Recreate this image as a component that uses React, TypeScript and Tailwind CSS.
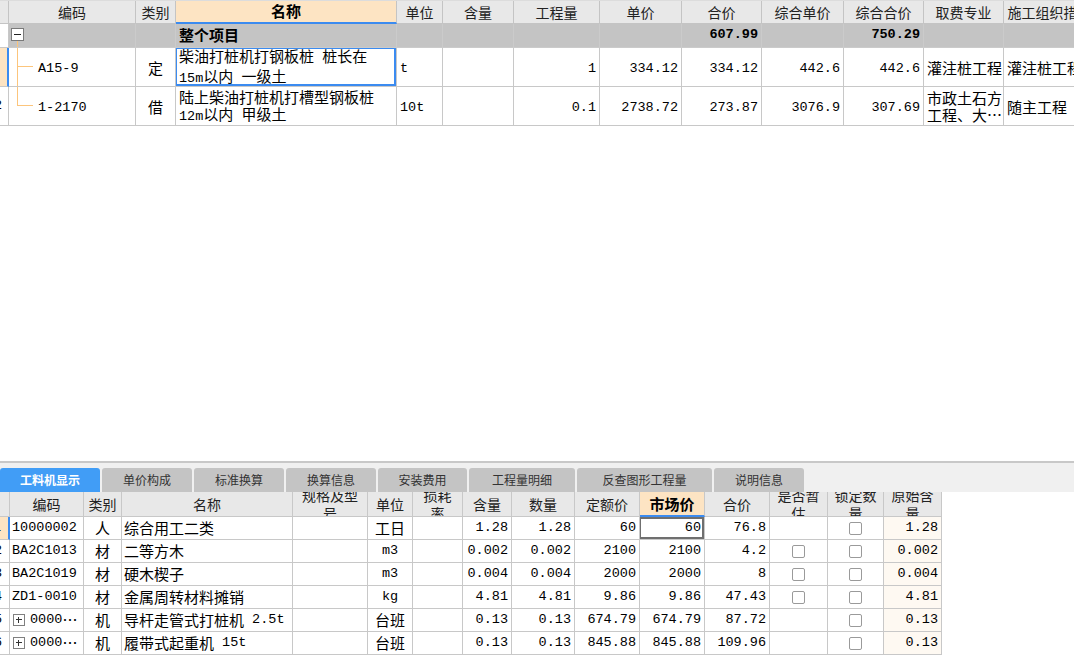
import React from 'react'

const cjk = "font-['Noto_Sans_CJK_SC',sans-serif]"
const mono = "font-['Liberation_Mono',monospace] text-[13.5px]"

type Align = 'l' | 'c' | 'r'

const alignClass: Record<Align, string> = {
  l: 'justify-start pl-[3px]',
  c: 'justify-center',
  r: 'justify-end pr-[3px]',
}

// ascii runs get the narrow mono face, like the half-width glyphs of the original grid font
function Txt({ s }: { s: string }) {
  const parts = s.split(/([\x20-\x7e]+)/).filter(Boolean)
  return (
    <>
      {parts.map((p, i) =>
        /^[\x20-\x7e]+$/.test(p) ? (
          <span key={i} className={`${mono} whitespace-pre`}>
            {p}
          </span>
        ) : (
          <span key={i}>{p}</span>
        ),
      )}
    </>
  )
}

function Lines({ lines }: { lines: string[] }) {
  return (
    <div className="flex flex-col leading-[17px]">
      {lines.map((l, i) => (
        <div key={i} className="whitespace-nowrap">
          <Txt s={l} />
        </div>
      ))}
    </div>
  )
}

function Check() {
  return <span className="block h-[13px] w-[13px] rounded-[2px] border border-[#9a9a9a] bg-white" />
}

function PlusBox() {
  return (
    <span className="relative mr-[5px] inline-block h-[12px] w-[12px] shrink-0 border border-[#808080] bg-white">
      <span className="absolute left-[2px] top-[4px] h-px w-[6px] bg-[#333]" />
      <span className="absolute left-[4px] top-[2px] h-[6px] w-px bg-[#333]" />
    </span>
  )
}

type TopCol = { key: string; w: string; head: string; align: Align }

const topCols: TopCol[] = [
  { key: 'code', w: 'w-[127px]', head: '编码', align: 'l' },
  { key: 'kind', w: 'w-[40px]', head: '类别', align: 'c' },
  { key: 'name', w: 'w-[221px]', head: '名称', align: 'l' },
  { key: 'unit', w: 'w-[46px]', head: '单位', align: 'l' },
  { key: 'rate', w: 'w-[71px]', head: '含量', align: 'r' },
  { key: 'qty', w: 'w-[86px]', head: '工程量', align: 'r' },
  { key: 'price', w: 'w-[82px]', head: '单价', align: 'r' },
  { key: 'sum', w: 'w-[80px]', head: '合价', align: 'r' },
  { key: 'cprice', w: 'w-[82px]', head: '综合单价', align: 'r' },
  { key: 'csum', w: 'w-[80px]', head: '综合合价', align: 'r' },
  { key: 'fee', w: 'w-[80px]', head: '取费专业', align: 'l' },
  { key: 'org', w: 'w-[120px]', head: '施工组织措施类别', align: 'l' },
]

type TopRow = {
  no: string
  selected: boolean
  last: boolean
  cells: Record<string, string[]>
}

const topRows: TopRow[] = [
  {
    no: '',
    selected: true,
    last: false,
    cells: {
      code: ['A15-9'],
      kind: ['定'],
      name: ['柴油打桩机打钢板桩 桩长在', '15m以内 一级土'],
      unit: ['t'],
      rate: [],
      qty: ['1'],
      price: ['334.12'],
      sum: ['334.12'],
      cprice: ['442.6'],
      csum: ['442.6'],
      fee: ['灌注桩工程'],
      org: ['灌注桩工程'],
    },
  },
  {
    no: '2',
    selected: false,
    last: true,
    cells: {
      code: ['1-2170'],
      kind: ['借'],
      name: ['陆上柴油打桩机打槽型钢板桩', '12m以内 甲级土'],
      unit: ['10t'],
      rate: [],
      qty: ['0.1'],
      price: ['2738.72'],
      sum: ['273.87'],
      cprice: ['3076.9'],
      csum: ['307.69'],
      fee: ['市政土石方', '工程、大…'],
      org: ['随主工程'],
    },
  },
]

type BotCol = { key: string; w: string; head: string[]; align: Align }

const botCols: BotCol[] = [
  { key: 'code', w: 'w-[74px]', head: ['编码'], align: 'l' },
  { key: 'kind', w: 'w-[38px]', head: ['类别'], align: 'c' },
  { key: 'name', w: 'w-[171px]', head: ['名称'], align: 'l' },
  { key: 'spec', w: 'w-[75px]', head: ['规格及型', '号'], align: 'l' },
  { key: 'unit', w: 'w-[45px]', head: ['单位'], align: 'c' },
  { key: 'loss', w: 'w-[50px]', head: ['损耗', '率'], align: 'r' },
  { key: 'rate', w: 'w-[49px]', head: ['含量'], align: 'r' },
  { key: 'qty', w: 'w-[63px]', head: ['数量'], align: 'r' },
  { key: 'base', w: 'w-[65px]', head: ['定额价'], align: 'r' },
  { key: 'market', w: 'w-[65px]', head: ['市场价'], align: 'r' },
  { key: 'sum', w: 'w-[65px]', head: ['合价'], align: 'r' },
  { key: 'est', w: 'w-[58px]', head: ['是否暂', '估'], align: 'c' },
  { key: 'lock', w: 'w-[56px]', head: ['锁定数', '量'], align: 'c' },
  { key: 'orig', w: 'w-[58px]', head: ['原始含', '量'], align: 'r' },
]

type BotRow = {
  no: string
  code: string
  expand?: boolean
  kind: string
  name: string
  unit: string
  rate: string
  qty: string
  base: string
  market: string
  sum: string
  est: boolean
  orig: string
}

const botRows: BotRow[] = [
  { no: '1', code: '10000002', kind: '人', name: '综合用工二类', unit: '工日', rate: '1.28', qty: '1.28', base: '60', market: '60', sum: '76.8', est: false, orig: '1.28' },
  { no: '2', code: 'BA2C1013', kind: '材', name: '二等方木', unit: 'm3', rate: '0.002', qty: '0.002', base: '2100', market: '2100', sum: '4.2', est: true, orig: '0.002' },
  { no: '3', code: 'BA2C1019', kind: '材', name: '硬木楔子', unit: 'm3', rate: '0.004', qty: '0.004', base: '2000', market: '2000', sum: '8', est: true, orig: '0.004' },
  { no: '4', code: 'ZD1-0010', kind: '材', name: '金属周转材料摊销', unit: 'kg', rate: '4.81', qty: '4.81', base: '9.86', market: '9.86', sum: '47.43', est: true, orig: '4.81' },
  { no: '5', code: '0000…', expand: true, kind: '机', name: '导杆走管式打桩机 2.5t', unit: '台班', rate: '0.13', qty: '0.13', base: '674.79', market: '674.79', sum: '87.72', est: false, orig: '0.13' },
  { no: '6', code: '0000…', expand: true, kind: '机', name: '履带式起重机 15t', unit: '台班', rate: '0.13', qty: '0.13', base: '845.88', market: '845.88', sum: '109.96', est: false, orig: '0.13' },
]

const tabs = [
  { label: '工料机显示', w: 'w-[100px]' },
  { label: '单价构成', w: 'w-[90px]' },
  { label: '标准换算', w: 'w-[90px]' },
  { label: '换算信息', w: 'w-[90px]' },
  { label: '安装费用', w: 'w-[89px]' },
  { label: '工程量明细', w: 'w-[106px]' },
  { label: '反查图形工程量', w: 'w-[135px]' },
  { label: '说明信息', w: 'w-[90px]' },
]

function TopTable() {
  return (
    <div className="w-full overflow-hidden">
      {/* header */}
      <div className="flex h-[24px] border-t border-[#dcdcdc] bg-[#e8e8e8] text-[14px] text-[#222]">
        <div className="w-[9px] shrink-0 border-r border-b border-[#c4c4c4]" />
        {topCols.map((c) => (
          <div
            key={c.key}
            className={`${c.w} flex shrink-0 items-center justify-center overflow-hidden whitespace-nowrap border-r border-[#c4c4c4] ${
              c.key === 'name' ? 'border-b-2 border-b-[#3b8bf0] bg-[#fde4c3] text-[15px] font-bold text-black' : 'border-b'
            }`}
          >
            {c.head}
          </div>
        ))}
      </div>

      {/* summary row */}
      <div className="flex h-[24px] bg-[#c4c4c4] text-[15px] font-bold">
        <div className="w-[9px] shrink-0 border-r border-b border-[#c8c8c8] bg-white" />
        {topCols.map((c) => (
          <div
            key={c.key}
            className={`${c.w} relative flex shrink-0 items-center overflow-hidden whitespace-nowrap border-r border-b border-[#cbcbcb] ${alignClass[c.align]}`}
          >
            {c.key === 'code' && (
              <>
                <span className="absolute left-[2px] top-[4px] h-[13px] w-[13px] border border-[#7a7a7a] bg-white">
                  <span className="absolute left-[2px] top-[5px] h-px w-[7px] bg-[#222]" />
                </span>
                <span className="absolute left-[8px] top-[17px] -bottom-px w-px bg-[#fcc57c]" />
              </>
            )}
            {c.key === 'name' && '整个项目'}
            {c.key === 'sum' && <Txt s="607.99" />}
            {c.key === 'csum' && <Txt s="750.29" />}
          </div>
        ))}
      </div>

      {topRows.map((r) => (
        <div key={r.cells.code[0]} className="flex h-[39px] bg-white text-[15px]">
          <div
            className={`flex w-[9px] shrink-0 items-center justify-end overflow-hidden border-b border-[#c8c8c8] pr-[6px] ${
              r.selected ? 'border-r-2 border-r-[#3b8bf0] bg-[#fde4c3]' : 'border-r'
            }`}
          >
            <Txt s={r.no} />
          </div>
          {topCols.map((c) => (
            <div
              key={c.key}
              className={`${c.w} relative flex shrink-0 items-center overflow-hidden whitespace-nowrap border-r border-b border-[#c8c8c8] ${
                c.key === 'code' ? 'pl-[29px]' : alignClass[c.align]
              }`}
            >
              {c.key === 'code' && (
                <>
                  <span className={`absolute left-[8px] -top-px w-px bg-[#fcc57c] ${r.last ? 'h-[20px]' : '-bottom-px'}`} />
                  <span className="absolute left-[8px] top-[18px] h-px w-[16px] bg-[#fcc57c]" />
                </>
              )}
              <Lines lines={r.cells[c.key]} />
              {c.key === 'name' && r.selected && (
                <span className="pointer-events-none absolute -left-px -top-px right-0 bottom-0 border-2 border-[#3b8bf0]" />
              )}
            </div>
          ))}
        </div>
      ))}
    </div>
  )
}

function botValue(r: BotRow, key: string): React.ReactNode {
  switch (key) {
    case 'code':
      return r.expand ? (
        <span className="flex items-center pl-px">
          <PlusBox />
          <Txt s={r.code} />
        </span>
      ) : (
        <Txt s={r.code} />
      )
    case 'est':
      return r.est ? <Check /> : null
    case 'lock':
      return <Check />
    case 'spec':
    case 'loss':
      return null
    default:
      return <Txt s={String(r[key as keyof BotRow] ?? '')} />
  }
}

function BottomTable() {
  return (
    <div className="w-full overflow-hidden">
      <div className="flex h-[25px] text-[14px] text-[#222]">
        <div className="w-[10px] shrink-0 border-r border-b border-[#c8c8c8] bg-[#e8e8e8]" />
        {botCols.map((c) => (
          <div
            key={c.key}
            className={`${c.w} flex shrink-0 flex-col items-center justify-center overflow-hidden whitespace-nowrap border-r border-[#c8c8c8] leading-[18px] ${
              c.key === 'market' ? 'border-b-2 border-b-[#3b8bf0] bg-[#fde4c3] text-[15px] font-bold text-black' : 'border-b bg-[#e8e8e8]'
            }`}
          >
            {c.head.map((h) => (
              <span key={h}>{h}</span>
            ))}
          </div>
        ))}
      </div>

      {botRows.map((r, ri) => (
        <div key={r.no} className="flex h-[23px] text-[15px]">
          <div
            className={`flex w-[10px] shrink-0 items-center justify-end overflow-hidden border-b border-[#c8c8c8] pr-[7px] ${
              ri === 0 ? 'border-r-2 border-r-[#3b8bf0] bg-[#fde4c3]' : 'border-r bg-white'
            }`}
          >
            <Txt s={r.no} />
          </div>
          {botCols.map((c) => (
            <div
              key={c.key}
              className={`${c.w} relative flex shrink-0 items-center overflow-hidden whitespace-nowrap border-r border-b border-[#c8c8c8] ${
                c.key === 'orig' ? 'bg-[#fef9f2]' : 'bg-white'
              } ${c.key === 'code' || c.key === 'name' ? 'justify-start pl-[2px]' : alignClass[c.align]}`}
            >
              {botValue(r, c.key)}
              {ri === 0 && c.key === 'market' && (
                <span className="pointer-events-none absolute -left-px top-0 right-0 bottom-0 border-2 border-[#6f6f6f]" />
              )}
            </div>
          ))}
        </div>
      ))}
    </div>
  )
}

export default function App() {
  return (
    <div className={`${cjk} flex h-[662px] w-[1074px] flex-col overflow-hidden bg-white text-black`}>
      <div className="h-[461px] shrink-0 overflow-hidden">
        <TopTable />
      </div>
      <div className="h-[2px] shrink-0 bg-[#c8c8c8]" />
      <div className="flex h-[29px] shrink-0 items-end gap-[2px] bg-[#f0f0f0]">
        {tabs.map((t, i) => (
          <div
            key={t.label}
            className={`${t.w} flex h-[24px] shrink-0 items-center justify-center rounded-t-[3px] text-[12px] ${
              i === 0 ? 'bg-[#419df6] font-bold text-white' : 'bg-[#c4c4c4] text-[#333]'
            }`}
          >
            {t.label}
          </div>
        ))}
      </div>
      <div className="flex-1 overflow-hidden">
        <BottomTable />
      </div>
    </div>
  )
}
